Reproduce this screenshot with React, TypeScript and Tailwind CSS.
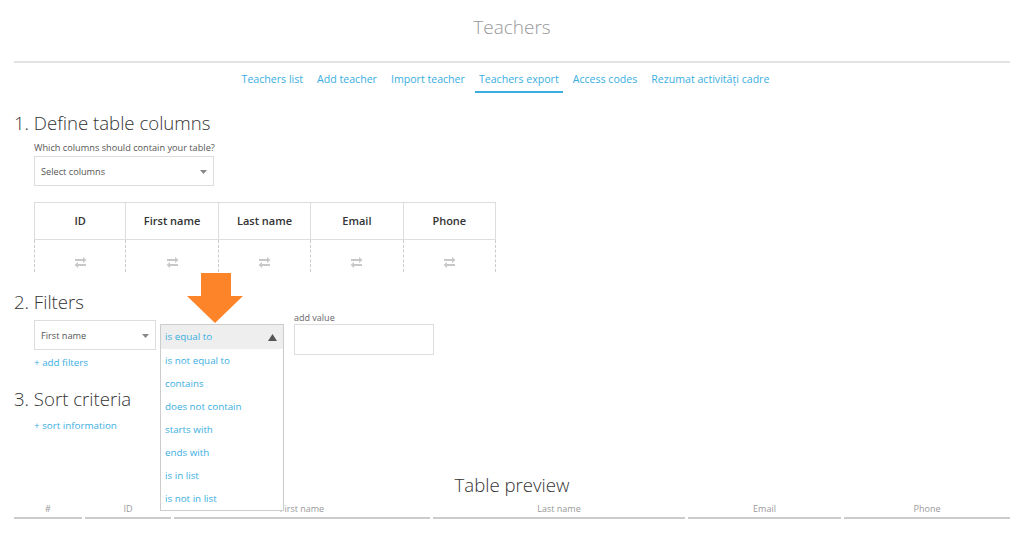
import React from "react";

const navLinks = [
  "Teachers list",
  "Add teacher",
  "Import teacher",
  "Teachers export",
  "Access codes",
  "Rezumat activități cadre",
];

const columns = ["ID", "First name", "Last name", "Email", "Phone"];

const operators = [
  "is not equal to",
  "contains",
  "does not contain",
  "starts with",
  "ends with",
  "is in list",
  "is not in list",
];

const previewCols = [
  { label: "#", w: "w-[68px]" },
  { label: "ID", w: "w-[86px]" },
  { label: "First name", w: "w-[256px]" },
  { label: "Last name", w: "w-[252px]" },
  { label: "Email", w: "w-[153px]" },
  { label: "Phone", w: "flex-1" },
];

function Caret() {
  return (
    <svg width="7" height="4" viewBox="0 0 7 4" className="shrink-0">
      <polygon points="0,0 7,0 3.5,4" fill="#888" />
    </svg>
  );
}

function SwapIcon() {
  return (
    <svg width="13" height="11" viewBox="0 0 13 11">
      <polygon points="1,2 9,2 9,0 12.5,3 9,6 9,4 1,4" fill="#c8c8c8" />
      <polygon points="12,7 4,7 4,5 0.5,8 4,11 4,9 12,9" fill="#c8c8c8" />
    </svg>
  );
}

function SectionTitle({ children, className = "" }: { children: React.ReactNode; className?: string }) {
  return (
    <h2 className={`text-[18.6px] leading-[24px] font-light text-[#333] ${className}`}>{children}</h2>
  );
}

export default function App() {
  return (
    <div className="relative min-h-screen bg-white px-[14px] font-['Open_Sans',sans-serif]">
      <h1 className="pt-[13px] text-center text-[19px] leading-[28px] font-light text-[#999]">
        Teachers
      </h1>
      <div className="mt-[20px] h-[2px] bg-[#e3e3e3]" />

      <nav className="mt-[8px] flex justify-center gap-[6px] pr-[13px]">
        {navLinks.map((l) => (
          <a
            key={l}
            className={`px-[4px] pb-[4px] text-[10.6px] leading-[16px] text-[#3aaee0] ${
              l === "Teachers export" ? "border-b-2 border-[#3aaee0]" : "border-b-2 border-transparent"
            }`}
          >
            {l}
          </a>
        ))}
      </nav>

      <SectionTitle className="mt-[18px]">1. Define table columns</SectionTitle>
      <div className="pl-[20px]">
        <p className="mt-[7px] text-[9.2px] leading-[12px] text-[#555]">
          Which columns should contain your table?
        </p>
        <div className="mt-[2px] flex h-[30px] w-[180px] items-center justify-between border border-[#ddd] pl-[6px] pr-[6px] pt-[2px] text-[9.2px] text-[#555]">
          <span>Select columns</span>
          <Caret />
        </div>

        <div className="mt-[16px] grid w-[462px] grid-cols-5">
          {columns.map((c, i) => (
            <div key={c} className="flex flex-col">
              <div
                className={`flex h-[38px] items-center justify-center border-t border-b border-r border-[#ddd] text-[11px] font-semibold text-[#333] ${
                  i === 0 ? "border-l" : ""
                }`}
              >
                {c}
              </div>
              <div
                className={`flex h-[32px] items-end justify-center border-r border-dashed border-[#ccc] pb-[4px] ${
                  i === 0 ? "border-l" : ""
                }`}
              >
                <SwapIcon />
              </div>
            </div>
          ))}
        </div>
      </div>

      <SectionTitle className="mt-[18px]">2. Filters</SectionTitle>
      <div className="-mt-[1px] flex items-start pl-[20px]">
        <div className="flex flex-col">
          <div className="mt-[7px] flex h-[30px] w-[122px] items-center justify-between border border-[#ddd] px-[6px] pt-[2px] text-[9.2px] text-[#555]">
            <span>First name</span>
            <Caret />
          </div>
          <a className="mt-[6px] text-[9.8px] leading-[13px] text-[#3aaee0]">+ add filters</a>
        </div>

        <div className="relative ml-[4px] mt-[11px] w-[124px]">
          <div className="flex h-[25px] items-center justify-between border border-b-0 border-[#ccc] bg-[#eee] pl-[4px] pr-[6px] text-[9.8px] text-[#3aaee0]">
            <span>is equal to</span>
            <svg width="9" height="7" viewBox="0 0 9 7">
              <polygon points="4.5,0 9,7 0,7" fill="#555" />
            </svg>
          </div>
          <div className="absolute left-0 top-[25px] z-10 w-[124px] border border-t-0 border-[#ccc] bg-white">
            {operators.map((o) => (
              <div key={o} className="flex h-[23px] items-center pl-[4px] pt-[1px] text-[9.8px] text-[#3aaee0]">
                {o}
              </div>
            ))}
          </div>
        </div>

        <div className="ml-[10px] flex flex-col">
          <span className="-mt-[1px] text-[9px] leading-[12px] text-[#666]">add value</span>
          <div className="h-[31px] w-[140px] border border-[#ddd]" />
        </div>
      </div>

      <SectionTitle className="mt-[18px]">3. Sort criteria</SectionTitle>
      <a className="mt-[8px] block pl-[20px] text-[9.8px] leading-[13px] text-[#3aaee0]">
        + sort information
      </a>

      <h2 className="mt-[41px] text-center text-[18.6px] leading-[24px] font-light text-[#333]">
        Table preview
      </h2>
      <div className="mt-[6px] flex gap-[3px]">
        {previewCols.map((c) => (
          <div
            key={c.label}
            className={`${c.w} border-b-2 border-[#ccc] pb-[2px] text-center text-[9px] leading-[12px] text-[#999]`}
          >
            {c.label}
          </div>
        ))}
      </div>

      <svg
        className="absolute left-[187px] top-[273px] z-20"
        width="56"
        height="50"
        viewBox="0 0 56 50"
      >
        <polygon points="14,0 44,0 44,23 56,23 28,50 0,23 14,23" fill="#fd8428" />
      </svg>
    </div>
  );
}
